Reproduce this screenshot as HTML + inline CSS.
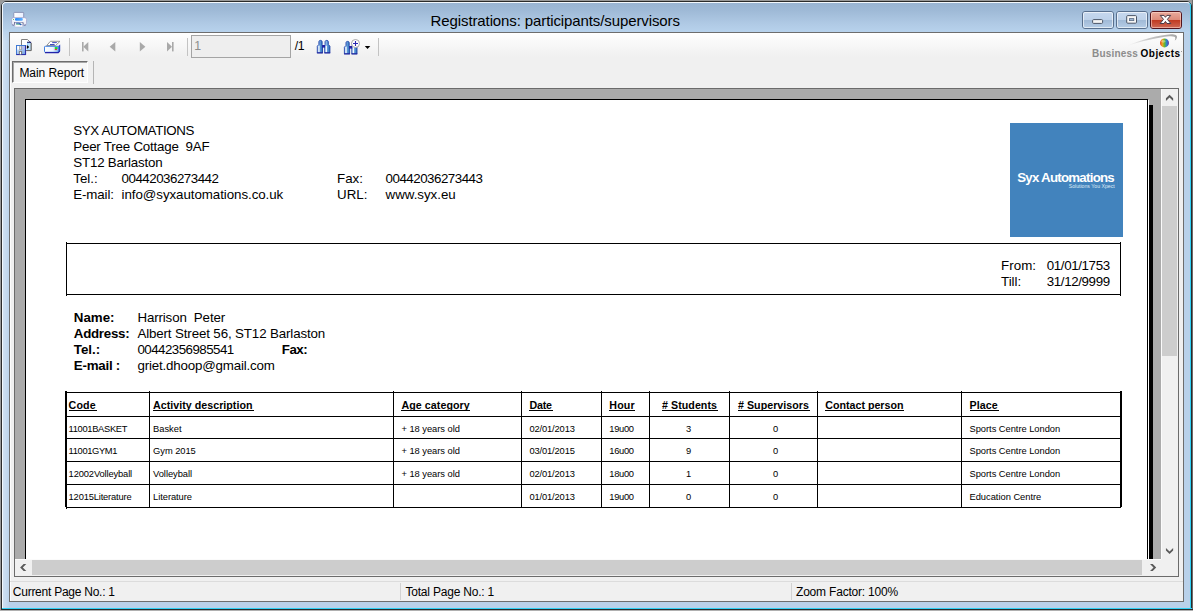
<!DOCTYPE html>
<html>
<head>
<meta charset="utf-8">
<title>Registrations: participants/supervisors</title>
<style>
*{margin:0;padding:0;box-sizing:border-box;}
html,body{width:1193px;height:611px;overflow:hidden;background:#b9d1ea;}
body{font-family:"Liberation Sans",sans-serif;position:relative;color:#000;font-size:12px;line-height:1;}
.a{position:absolute;}
.t{position:absolute;white-space:pre;line-height:1;font-family:"Liberation Sans",sans-serif;}
svg{position:absolute;overflow:visible;}
</style>
</head>
<body>
<div class="a" style="left:0px;top:0px;width:1193px;height:611px;background:#9c9c9c;"></div>
<div class="a" style="left:1px;top:1px;width:1191px;height:609px;background:#b9d1ea;border-radius:5px 5px 0 0;"></div>
<div class="a" style="left:2px;top:2px;width:1189px;height:31px;background:linear-gradient(#99b4d2 0,#9eb9d6 8px,#b0cae5 22px,#b8d3ed 31px);border-radius:4px 4px 0 0;"></div>
<div class="a" style="left:1px;top:1px;width:1191px;height:620px;border:1px solid #2b2b2b;border-radius:5px 5px 0 0;"></div>
<div class="a" style="left:2px;top:2px;width:1189px;height:620px;border:1px solid #f3f8fd;border-radius:4px 4px 0 0;border-right-color:#2fd0f5;"></div>
<div class="a" style="left:0px;top:0px;width:1px;height:611px;background:#9a9a9a;"></div>
<div class="a" style="left:0px;top:0px;width:1193px;height:1px;background:#9a9a9a;"></div>
<div class="a" style="left:1192px;top:0px;width:1px;height:611px;background:#6a6a6a;"></div>
<div class="a" style="left:2px;top:608px;width:1190px;height:1px;background:#2fd0f5;"></div>
<div class="a" style="left:1px;top:609px;width:1192px;height:1px;background:#2b2b2b;"></div>
<div class="a" style="left:0px;top:610px;width:1193px;height:1px;background:#b0b0b0;"></div>
<div class="t" style="left:430.60px;top:12px;font-size:15px;line-height:17px;height:17px;letter-spacing:-0.109px;">Registrations: participants/supervisors</div>
<div class="a" style="left:3px;top:28px;width:6px;height:580px;background:linear-gradient(90deg,#d0e0f1,#bdd4ec);-webkit-mask-image:linear-gradient(transparent,#000 14px);mask-image:linear-gradient(transparent,#000 14px);"></div>
<div class="a" style="left:9px;top:32px;width:1175px;height:570px;background:#f0f0f0;border:1px solid #6d6d6d;"></div>
<div class="a" style="left:10px;top:33px;width:1px;height:568px;background:#fcfcfc;"></div>
<div class="a" style="left:10px;top:33px;width:1173px;height:28px;background:linear-gradient(#ffffff 0,#fafafa 7px,#f0f0f0 24px);"></div>
<div class="a" style="left:69px;top:38px;width:1px;height:18px;background:#c3c3c3;"></div>
<div class="a" style="left:187px;top:38px;width:1px;height:18px;background:#c3c3c3;"></div>
<div class="a" style="left:378px;top:38px;width:1px;height:18px;background:#c3c3c3;"></div>
<svg style="left:80px;top:40px" width="100" height="14" viewBox="80 40 100 14"><g fill="#a9a9a9"><rect x="82" y="42" width="1.6" height="9.4"/><path d="M88.3 42v9.4l-5-4.7z"/><path d="M115.3 42v9.4l-5.6-4.7z"/><path d="M139.8 42v9.4l5.6-4.7z"/><path d="M167 42v9.4l5-4.7z"/><rect x="172" y="42" width="1.6" height="9.4"/></g></svg>
<div class="a" style="left:191px;top:35px;width:100px;height:23px;background:#eeeeee;border:1px solid #a4a4a4;"></div>
<div class="t" style="left:194.20px;top:39px;font-size:12.3px;line-height:14px;height:14px;color:#8c8c8c;">1</div>
<div class="t" style="left:294.80px;top:39px;font-size:12.3px;line-height:14px;height:14px;letter-spacing:-0.458px;">/1</div>
<div class="a" style="left:12px;top:61px;width:76px;height:22px;background:#f7f7f7;border:1px solid;border-color:#6d6d6d #fefefe #fefefe #6d6d6d;"></div>
<div class="a" style="left:13px;top:62px;width:74px;height:1px;background:#a8a8a8;"></div>
<div class="a" style="left:13px;top:62px;width:1px;height:20px;background:#a8a8a8;"></div>
<div class="t" style="left:19.40px;top:66px;font-size:12px;line-height:14px;height:14px;letter-spacing:-0.056px;">Main Report</div>
<div class="a" style="left:93px;top:61px;width:1px;height:23px;background:#b5b5b5;"></div>
<div class="a" style="left:14px;top:88px;width:1165px;height:489px;background:#ababab;border:1px solid #6b6b6b;"></div>
<div class="a" style="left:25px;top:99px;width:1123px;height:460px;background:#fff;border:1px solid #000;border-bottom:none;"></div>
<div class="a" style="left:1148px;top:100px;width:1px;height:459px;background:#fff;"></div>
<div class="a" style="left:1149px;top:105px;width:4px;height:454px;background:#000;"></div>
<div class="a" style="left:1161px;top:89px;width:17px;height:470px;background:#f0f0f0;"></div>
<div class="a" style="left:1161px;top:89px;width:1px;height:470px;background:#fbfbfb;"></div>
<div class="a" style="left:1162px;top:106px;width:15px;height:250px;background:#cdcdcd;"></div>
<div class="a" style="left:15px;top:559px;width:1163px;height:17px;background:#f0f0f0;"></div>
<div class="a" style="left:15px;top:559px;width:1146px;height:1px;background:#fbfbfb;"></div>
<div class="a" style="left:32px;top:560px;width:1110px;height:15px;background:#cdcdcd;"></div>
<div class="t" style="left:73.30px;top:123px;font-size:13.33px;line-height:15px;height:15px;letter-spacing:-0.355px;">SYX AUTOMATIONS</div>
<div class="t" style="left:73.30px;top:139px;font-size:13.33px;line-height:15px;height:15px;letter-spacing:-0.213px;">Peer Tree Cottage  9AF</div>
<div class="t" style="left:73.30px;top:155px;font-size:13.33px;line-height:15px;height:15px;letter-spacing:-0.198px;">ST12 Barlaston</div>
<div class="t" style="left:73.30px;top:171px;font-size:13.33px;line-height:15px;height:15px;letter-spacing:-0.012px;">Tel.:</div>
<div class="t" style="left:121.60px;top:171px;font-size:13.33px;line-height:15px;height:15px;letter-spacing:-0.499px;">00442036273442</div>
<div class="t" style="left:73.30px;top:187px;font-size:13.33px;line-height:15px;height:15px;letter-spacing:-0.129px;">E-mail:</div>
<div class="t" style="left:121.60px;top:187px;font-size:13.33px;line-height:15px;height:15px;letter-spacing:-0.063px;">info@syxautomations.co.uk</div>
<div class="t" style="left:337.00px;top:171px;font-size:13.33px;line-height:15px;height:15px;">Fax:</div>
<div class="t" style="left:385.60px;top:171px;font-size:13.33px;line-height:15px;height:15px;letter-spacing:-0.499px;">00442036273443</div>
<div class="t" style="left:337.00px;top:187px;font-size:13.33px;line-height:15px;height:15px;">URL:</div>
<div class="t" style="left:385.60px;top:187px;font-size:13.33px;line-height:15px;height:15px;letter-spacing:-0.030px;">www.syx.eu</div>
<div class="a" style="left:1010px;top:123px;width:113px;height:114px;background:#4283bd;"></div>
<div class="t" style="left:1017.20px;top:170px;font-size:13.3px;line-height:15px;height:15px;letter-spacing:-0.753px;font-weight:bold;color:#fff;">Syx Automations</div>
<div class="t" style="left:1068.70px;top:183px;font-size:5.2px;line-height:6px;height:6px;letter-spacing:-0.009px;color:#dfe9f4;">Solutions You Xpect</div>
<div class="a" style="left:66px;top:243px;width:1055px;height:1px;background:#000;"></div>
<div class="a" style="left:66px;top:294px;width:1055px;height:1px;background:#000;"></div>
<div class="a" style="left:66px;top:242px;width:1px;height:54px;background:#000;"></div>
<div class="a" style="left:1120px;top:242px;width:1px;height:54px;background:#000;"></div>
<div class="t" style="left:1001.00px;top:258px;font-size:13.33px;line-height:15px;height:15px;letter-spacing:0.049px;">From:</div>
<div class="t" style="left:1046.80px;top:258px;font-size:13.33px;line-height:15px;height:15px;letter-spacing:-0.379px;">01/01/1753</div>
<div class="t" style="left:1001.00px;top:274px;font-size:13.33px;line-height:15px;height:15px;">Till:</div>
<div class="t" style="left:1046.80px;top:274px;font-size:13.33px;line-height:15px;height:15px;letter-spacing:-0.379px;">31/12/9999</div>
<div class="t" style="left:73.80px;top:310px;font-size:13.33px;line-height:15px;height:15px;font-weight:bold;">Name:</div>
<div class="t" style="left:137.40px;top:310px;font-size:13.33px;line-height:15px;height:15px;letter-spacing:-0.131px;">Harrison  Peter</div>
<div class="t" style="left:73.80px;top:326px;font-size:13.33px;line-height:15px;height:15px;letter-spacing:-0.283px;font-weight:bold;">Address:</div>
<div class="t" style="left:137.40px;top:326px;font-size:13.33px;line-height:15px;height:15px;letter-spacing:-0.129px;">Albert Street 56, ST12 Barlaston</div>
<div class="t" style="left:73.80px;top:342px;font-size:13.33px;line-height:15px;height:15px;font-weight:bold;">Tel.:</div>
<div class="t" style="left:137.40px;top:342px;font-size:13.33px;line-height:15px;height:15px;letter-spacing:-0.530px;">00442356985541</div>
<div class="t" style="left:281.80px;top:342px;font-size:13.33px;line-height:15px;height:15px;letter-spacing:-0.503px;font-weight:bold;">Fax:</div>
<div class="t" style="left:73.80px;top:358px;font-size:13.33px;line-height:15px;height:15px;letter-spacing:-0.235px;font-weight:bold;">E-mail :</div>
<div class="t" style="left:137.40px;top:358px;font-size:13.33px;line-height:15px;height:15px;letter-spacing:-0.169px;">griet.dhoop@gmail.com</div>
<div class="a" style="left:66px;top:392px;width:1055px;height:1px;background:#000;"></div>
<div class="a" style="left:66px;top:416px;width:1055px;height:1px;background:#000;"></div>
<div class="a" style="left:66px;top:438px;width:1055px;height:1px;background:#000;"></div>
<div class="a" style="left:66px;top:461px;width:1055px;height:1px;background:#000;"></div>
<div class="a" style="left:66px;top:484px;width:1055px;height:1px;background:#000;"></div>
<div class="a" style="left:66px;top:507px;width:1055px;height:1px;background:#000;"></div>
<div class="a" style="left:149px;top:391px;width:1px;height:117px;background:#000;"></div>
<div class="a" style="left:393px;top:391px;width:1px;height:117px;background:#000;"></div>
<div class="a" style="left:521px;top:391px;width:1px;height:117px;background:#000;"></div>
<div class="a" style="left:601px;top:391px;width:1px;height:117px;background:#000;"></div>
<div class="a" style="left:649px;top:391px;width:1px;height:117px;background:#000;"></div>
<div class="a" style="left:729px;top:391px;width:1px;height:117px;background:#000;"></div>
<div class="a" style="left:817px;top:391px;width:1px;height:117px;background:#000;"></div>
<div class="a" style="left:961px;top:391px;width:1px;height:117px;background:#000;"></div>
<div class="a" style="left:65px;top:391px;width:1px;height:116px;background:#000;"></div>
<div class="a" style="left:66px;top:391px;width:1px;height:118px;background:#000;"></div>
<div class="a" style="left:1120px;top:391px;width:1px;height:117px;background:#000;"></div>
<div class="a" style="left:1121px;top:391px;width:1px;height:116px;background:#000;"></div>
<div class="t" style="left:68.60px;top:399px;font-size:10.67px;line-height:12px;height:12px;letter-spacing:0.142px;font-weight:bold;">Code</div>
<div class="a" style="left:69px;top:410px;width:28px;height:1px;background:#000;"></div>
<div class="t" style="left:153.10px;top:399px;font-size:10.67px;line-height:12px;height:12px;letter-spacing:0.025px;font-weight:bold;">Activity description</div>
<div class="a" style="left:153px;top:410px;width:101px;height:1px;background:#000;"></div>
<div class="t" style="left:401.40px;top:399px;font-size:10.67px;line-height:12px;height:12px;letter-spacing:0.073px;font-weight:bold;">Age category</div>
<div class="a" style="left:401px;top:410px;width:69px;height:1px;background:#000;"></div>
<div class="t" style="left:529.40px;top:399px;font-size:10.67px;line-height:12px;height:12px;letter-spacing:-0.176px;font-weight:bold;">Date</div>
<div class="a" style="left:529px;top:410px;width:24px;height:1px;background:#000;"></div>
<div class="t" style="left:609.30px;top:399px;font-size:10.67px;line-height:12px;height:12px;letter-spacing:0.169px;font-weight:bold;">Hour</div>
<div class="a" style="left:609px;top:410px;width:26px;height:1px;background:#000;"></div>
<div class="t" style="left:662.10px;top:399px;font-size:10.67px;line-height:12px;height:12px;letter-spacing:0.040px;font-weight:bold;"># Students</div>
<div class="a" style="left:662px;top:410px;width:56px;height:1px;background:#000;"></div>
<div class="t" style="left:738.00px;top:399px;font-size:10.67px;line-height:12px;height:12px;letter-spacing:0.035px;font-weight:bold;"># Supervisors</div>
<div class="a" style="left:738px;top:410px;width:72px;height:1px;background:#000;"></div>
<div class="t" style="left:825.30px;top:399px;font-size:10.67px;line-height:12px;height:12px;letter-spacing:-0.004px;font-weight:bold;">Contact person</div>
<div class="a" style="left:825px;top:410px;width:79px;height:1px;background:#000;"></div>
<div class="t" style="left:969.50px;top:399px;font-size:10.67px;line-height:12px;height:12px;letter-spacing:0.104px;font-weight:bold;">Place</div>
<div class="a" style="left:970px;top:410px;width:29px;height:1px;background:#000;"></div>
<div class="t" style="left:68.60px;top:424px;font-size:9.33px;line-height:10px;height:10px;letter-spacing:-0.327px;">11001BASKET</div>
<div class="t" style="left:153.10px;top:424px;font-size:9.33px;line-height:10px;height:10px;letter-spacing:-0.025px;">Basket</div>
<div class="t" style="left:401.40px;top:424px;font-size:9.33px;line-height:10px;height:10px;letter-spacing:-0.021px;">+ 18 years old</div>
<div class="t" style="left:529.40px;top:424px;font-size:9.33px;line-height:10px;height:10px;letter-spacing:-0.133px;">02/01/2013</div>
<div class="t" style="left:609.30px;top:424px;font-size:9.33px;line-height:10px;height:10px;letter-spacing:-0.311px;">19u00</div>
<div class="t" style="left:685.91px;top:424px;font-size:9.33px;line-height:10px;height:10px;">3</div>
<div class="t" style="left:772.91px;top:424px;font-size:9.33px;line-height:10px;height:10px;">0</div>
<div class="t" style="left:969.50px;top:424px;font-size:9.33px;line-height:10px;height:10px;letter-spacing:-0.031px;">Sports Centre London</div>
<div class="t" style="left:68.60px;top:446px;font-size:9.33px;line-height:10px;height:10px;letter-spacing:-0.362px;">11001GYM1</div>
<div class="t" style="left:153.10px;top:446px;font-size:9.33px;line-height:10px;height:10px;letter-spacing:-0.049px;">Gym 2015</div>
<div class="t" style="left:401.40px;top:446px;font-size:9.33px;line-height:10px;height:10px;letter-spacing:-0.021px;">+ 18 years old</div>
<div class="t" style="left:529.40px;top:446px;font-size:9.33px;line-height:10px;height:10px;letter-spacing:-0.133px;">03/01/2015</div>
<div class="t" style="left:609.30px;top:446px;font-size:9.33px;line-height:10px;height:10px;letter-spacing:-0.311px;">16u00</div>
<div class="t" style="left:685.91px;top:446px;font-size:9.33px;line-height:10px;height:10px;">9</div>
<div class="t" style="left:772.91px;top:446px;font-size:9.33px;line-height:10px;height:10px;">0</div>
<div class="t" style="left:969.50px;top:446px;font-size:9.33px;line-height:10px;height:10px;letter-spacing:-0.031px;">Sports Centre London</div>
<div class="t" style="left:68.60px;top:469px;font-size:9.33px;line-height:10px;height:10px;letter-spacing:-0.126px;">12002Volleyball</div>
<div class="t" style="left:153.10px;top:469px;font-size:9.33px;line-height:10px;height:10px;letter-spacing:-0.058px;">Volleyball</div>
<div class="t" style="left:401.40px;top:469px;font-size:9.33px;line-height:10px;height:10px;letter-spacing:-0.021px;">+ 18 years old</div>
<div class="t" style="left:529.40px;top:469px;font-size:9.33px;line-height:10px;height:10px;letter-spacing:-0.133px;">02/01/2013</div>
<div class="t" style="left:609.30px;top:469px;font-size:9.33px;line-height:10px;height:10px;letter-spacing:-0.311px;">18u00</div>
<div class="t" style="left:685.91px;top:469px;font-size:9.33px;line-height:10px;height:10px;">1</div>
<div class="t" style="left:772.91px;top:469px;font-size:9.33px;line-height:10px;height:10px;">0</div>
<div class="t" style="left:969.50px;top:469px;font-size:9.33px;line-height:10px;height:10px;letter-spacing:-0.031px;">Sports Centre London</div>
<div class="t" style="left:68.60px;top:492px;font-size:9.33px;line-height:10px;height:10px;letter-spacing:-0.161px;">12015Literature</div>
<div class="t" style="left:153.10px;top:492px;font-size:9.33px;line-height:10px;height:10px;letter-spacing:-0.057px;">Literature</div>
<div class="t" style="left:529.40px;top:492px;font-size:9.33px;line-height:10px;height:10px;letter-spacing:-0.133px;">01/01/2013</div>
<div class="t" style="left:609.30px;top:492px;font-size:9.33px;line-height:10px;height:10px;letter-spacing:-0.311px;">19u00</div>
<div class="t" style="left:685.91px;top:492px;font-size:9.33px;line-height:10px;height:10px;">0</div>
<div class="t" style="left:772.91px;top:492px;font-size:9.33px;line-height:10px;height:10px;">0</div>
<div class="t" style="left:969.50px;top:492px;font-size:9.33px;line-height:10px;height:10px;letter-spacing:-0.020px;">Education Centre</div>
<div class="a" style="left:10px;top:581px;width:1173px;height:1px;background:#dcdcdc;"></div>
<div class="a" style="left:400px;top:583px;width:1px;height:17px;background:#d2d2d2;"></div>
<div class="a" style="left:791px;top:583px;width:1px;height:17px;background:#d2d2d2;"></div>
<div class="t" style="left:12.80px;top:585px;font-size:12px;line-height:14px;height:14px;letter-spacing:-0.251px;">Current Page No.: 1</div>
<div class="t" style="left:405.40px;top:585px;font-size:12px;line-height:14px;height:14px;letter-spacing:-0.197px;">Total Page No.: 1</div>
<div class="t" style="left:796.00px;top:585px;font-size:12px;line-height:14px;height:14px;letter-spacing:-0.198px;">Zoom Factor: 100%</div>
<svg style="left:10px;top:10px" width="20" height="20" viewBox="10 10 20 20">
<defs><linearGradient id="pb" x1="0" y1="0" x2="0" y2="1"><stop offset="0" stop-color="#ffffff"/><stop offset="1" stop-color="#e3e6f4"/></linearGradient>
<linearGradient id="ps" x1="0" y1="0" x2="1" y2="0"><stop offset="0" stop-color="#2a86f2"/><stop offset="1" stop-color="#5fb2ff"/></linearGradient>
<linearGradient id="pp" x1="0" y1="0" x2="1" y2="0"><stop offset="0" stop-color="#ffffff"/><stop offset="1" stop-color="#e9efff"/></linearGradient></defs>
<rect x="13.800" y="12.400" width="9.900" height="5.800" rx="0.700" fill="url(#pp)" stroke="#7f86ab" stroke-width="0.800"/>
<rect x="11.6" y="17.700" width="14.900" height="7.400" rx="1.700" fill="url(#pb)" stroke="#a4a8d0" stroke-width="0.800"/>
<path d="M12.200 24.600q0.300 0.700 1.700 0.700M26 24.600q-0.300 0.700-2.200 0.700" stroke="#6c6c98" stroke-width="0.800" fill="none"/>
<rect x="15" y="17.900" width="7.800" height="2.900" rx="1.200" fill="url(#ps)"/>
<rect x="13.100" y="19" width="0.900" height="0.900" fill="#3fae3f"/>
<rect x="14" y="22.400" width="9.400" height="2.200" fill="#23285e"/>
<rect x="14.900" y="22.700" width="7.700" height="4.300" rx="0.500" fill="#fdfdff" stroke="#b3b7d8" stroke-width="0.600"/>
<path d="M16 23.500h4.600l1.200 1.200-5.800-0.300z" fill="#2e9a6a"/><path d="M16.200 22.800h3l2.800 2.200-1.600 0.300-1.400-1.700h-2.800z" fill="#2a4fc0"/>
</svg>
<div class="a" style="left:1082px;top:11px;width:32px;height:18px;border:1px solid #586f8d;border-radius:3px;overflow:hidden;"><div class="a" style="left:0;top:0;width:100%;height:8px;background:linear-gradient(#c6d8ee,#bdd1e9)"></div><div class="a" style="left:0;top:8px;width:100%;height:8px;background:linear-gradient(#a0b9d6,#b6cde7)"></div><div class="a" style="left:0;top:0;width:30px;height:16px;border:1px solid rgba(255,255,255,.6);border-radius:2px;"></div></div>
<div class="a" style="left:1116px;top:11px;width:32px;height:18px;border:1px solid #586f8d;border-radius:3px;overflow:hidden;"><div class="a" style="left:0;top:0;width:100%;height:8px;background:linear-gradient(#c6d8ee,#bdd1e9)"></div><div class="a" style="left:0;top:8px;width:100%;height:8px;background:linear-gradient(#a0b9d6,#b6cde7)"></div><div class="a" style="left:0;top:0;width:30px;height:16px;border:1px solid rgba(255,255,255,.6);border-radius:2px;"></div></div>
<div class="a" style="left:1150px;top:11px;width:32px;height:18px;border:1px solid #53141d;border-radius:3px;overflow:hidden;"><div class="a" style="left:0;top:0;width:100%;height:8px;background:linear-gradient(#e9aa9c,#dd8a79)"></div><div class="a" style="left:0;top:8px;width:100%;height:8px;background:linear-gradient(#c0381f,#cf6a57)"></div><div class="a" style="left:0;top:0;width:30px;height:16px;border:1px solid rgba(255,220,210,.55);border-radius:2px;"></div></div>
<svg style="left:1080px;top:8px" width="106" height="24" viewBox="1080 8 106 24">
<rect x="1092.6" y="19.6" width="10" height="3.8" rx="1" fill="#f4f4f4" stroke="#4b5567" stroke-width="1"/>
<rect x="1126.7" y="15.6" width="9.8" height="7.6" rx="1" fill="#f6f6f6" stroke="#4b5567" stroke-width="1"/>
<rect x="1129.4" y="18.6" width="4.4" height="2" fill="#9db6d3" stroke="#5b6b84" stroke-width="0.8"/>
<path d="M1160.2 15.4h3.8l1.450 1.900 1.450-1.900h3.800l-3.300 3.950 3.400 4.150h-3.900l-1.450-2.100-1.450 2.100h-3.900l3.400-4.150z" fill="#ffffff" stroke="#4a3b47" stroke-width="1" stroke-linejoin="round"/>
</svg>
<svg style="left:14px;top:36px" width="50" height="22" viewBox="14 36 50 22">
<defs><linearGradient id="fl" x1="0" y1="0" x2="1" y2="1"><stop offset="0" stop-color="#e8f3ff"/><stop offset="0.5" stop-color="#a9c8f0"/><stop offset="1" stop-color="#6f9fe0"/></linearGradient>
<linearGradient id="pr" x1="0" y1="0" x2="1" y2="0"><stop offset="0" stop-color="#ffffff"/><stop offset="0.6" stop-color="#eaf4ff"/><stop offset="1" stop-color="#8fc0f0"/></linearGradient></defs>
<path d="M21.5 39.5h6l3.5 3.5v7.5h-9.500z" fill="#ffffff" stroke="#7f7f7f" stroke-width="1"/>
<rect x="27" y="43" width="3.500" height="7" fill="#9bd6ff"/><rect x="28.600" y="43.500" width="1" height="6" fill="#e8f6ff"/>
<path d="M27 42.3h4.2" stroke="#14186e" stroke-width="1.1"/>
<path d="M26.900 44.900l2.300 2-2.300 2z" fill="#000"/>
<path d="M31.2 43v7.6h-4.5" fill="none" stroke="#6e6e6e" stroke-width="1"/>
<rect x="16.5" y="45.5" width="9" height="9" fill="url(#fl)" stroke="#3f78d4" stroke-width="1"/>
<path d="M16.3 54.6h9.4M25.6 45.5v9.3" stroke="#2a2aa6" stroke-width="1" fill="none"/>
<rect x="17.300" y="46.100" width="2.100" height="3.500" fill="#ffffff"/><rect x="19.300" y="46" width="2.500" height="4.100" fill="#9c9c9c"/><rect x="20" y="46.200" width="1" height="3.200" fill="#e4e4e4"/>
<rect x="22" y="46.200" width="3" height="3" fill="#b9b4ea" opacity=".7"/>
<rect x="18.900" y="51" width="3.200" height="3.300" fill="#7c7c7c"/><rect x="19.900" y="51.900" width="1.100" height="2.400" fill="#ffffff"/>
<!-- print icon -->
<path d="M50.4 41.3h9.6l-4.4 4.2h-8.9z" fill="#ffffff" stroke="#8a8a8a" stroke-width="0.9"/>
<path d="M52.2 42.6h4.6M50 44.5h4.6" stroke="#2b35b5" stroke-width="0.9"/>
<path d="M58.3 46l1.9-1.6v6.2l-1.9 1.9z" fill="#2743c8"/>
<rect x="44.5" y="46.3" width="13.8" height="6" rx="0.8" fill="url(#pr)" stroke="#3f7fe0" stroke-width="1"/>
<path d="M45 52.6h13.2l1.6-1.6" stroke="#2222aa" stroke-width="1.1" fill="none"/>
<rect x="54.8" y="47.1" width="2.7" height="1.9" fill="#1edb2a"/><rect x="54.8" y="49.1" width="2.2" height="1" fill="#f0202a"/>
</svg>
<svg style="left:314px;top:36px" width="62" height="22" viewBox="314 36 62 22">
<defs><linearGradient id="bn" x1="0" y1="0" x2="1" y2="0"><stop offset="0" stop-color="#cfe6ff"/><stop offset="0.45" stop-color="#6aa3de"/><stop offset="1" stop-color="#2a6fb8"/></linearGradient></defs>
<g transform="translate(316.9 40.2)"><path d="M0.4 12.6V6l1.6-1.8V1.4c0-1.6 3.2-1.6 3.2 0v2.8L5.6 6v6.600z" fill="url(#bn)" stroke="#1d3fa8" stroke-width="0.9" stroke-linejoin="round"/><path d="M7.8 12.6V6l0.400-1.800V1.400c0-1.600 3.200-1.600 3.200 0v2.800L13 6v6.600z" fill="url(#bn)" stroke="#1d3fa8" stroke-width="0.9" stroke-linejoin="round"/><rect x="5.200" y="4.800" width="3" height="2.600" fill="#2222a4"/><rect x="1.500" y="5.600" width="1.200" height="6.400" fill="#ffffff" opacity=".9"/><rect x="8.900" y="5.600" width="1.200" height="6.400" fill="#ffffff" opacity=".9"/><path d="M0 12.700h6M7.400 12.700h6" stroke="#1c1c9c" stroke-width="1"/></g><g transform="translate(344 41.2)"><path d="M0.4 12.6V6l1.6-1.8V1.4c0-1.6 3.2-1.6 3.2 0v2.8L5.6 6v6.600z" fill="url(#bn)" stroke="#1d3fa8" stroke-width="0.9" stroke-linejoin="round"/><path d="M7.8 12.6V6l0.400-1.800V1.400c0-1.600 3.200-1.600 3.200 0v2.800L13 6v6.600z" fill="url(#bn)" stroke="#1d3fa8" stroke-width="0.9" stroke-linejoin="round"/><rect x="5.200" y="4.800" width="3" height="2.600" fill="#2222a4"/><rect x="1.500" y="5.600" width="1.200" height="6.400" fill="#ffffff" opacity=".9"/><rect x="8.900" y="5.600" width="1.200" height="6.400" fill="#ffffff" opacity=".9"/><path d="M0 12.700h6M7.400 12.700h6" stroke="#1c1c9c" stroke-width="1"/></g>
<circle cx="355.5" cy="43.5" r="4" fill="#ffffff" stroke="#a6a6a6" stroke-width="1"/>
<path d="M353 43.500h5M355.500 41v5" stroke="#2a2ab0" stroke-width="1.100"/>
<path d="M364.800 46.100h5.500l-2.750 3z" fill="#000"/>
</svg>
<svg style="left:1085px;top:33px" width="98" height="28" viewBox="1085 33 98 28">
<defs><linearGradient id="rb" x1="0" y1="0" x2="1" y2="0"><stop offset="0" stop-color="#e0392b"/><stop offset="0.25" stop-color="#f0a020"/><stop offset="0.5" stop-color="#6ab82e"/><stop offset="0.75" stop-color="#2a7fd0"/><stop offset="1" stop-color="#6a3aa8"/></linearGradient>
<linearGradient id="sw" x1="0" y1="0" x2="1" y2="0"><stop offset="0" stop-color="#d0d0d0" stop-opacity="0"/><stop offset="0.45" stop-color="#c6c6c6"/><stop offset="1" stop-color="#a6a6a6"/></linearGradient></defs>
<path d="M1126 46.300C1140 40 1160 34.600 1171 34.200C1175 34.100 1177.400 35.400 1177 37.200C1176.700 38.600 1176 39.800 1174.800 40.600C1175.400 38.800 1175.600 37.400 1174.400 36.800C1172.500 35.900 1168 36.200 1162 37.300C1150 39.500 1137 42.400 1126 46.300Z" fill="url(#sw)"/>
<circle cx="1164.500" cy="42.900" r="4.500" fill="url(#rb)"/>
<ellipse cx="1163.300" cy="41.300" rx="2" ry="1.400" fill="#fff" opacity=".35"/>
</svg>
<div class="t" style="left:1092.00px;top:48px;font-size:10px;line-height:11px;height:11px;letter-spacing:0.191px;font-weight:bold;color:#8c8c8c;">Business</div>
<div class="t" style="left:1140.60px;top:48px;font-size:10px;line-height:11px;height:11px;letter-spacing:0.453px;font-weight:bold;color:#000;">Objects</div>
<div class="a" style="left:1181px;top:51px;width:1px;height:1px;background:#9a9a9a;"></div>
<svg style="left:0;top:0" width="1193" height="611" viewBox="0 0 1193 611"><g fill="#5a5a5a"><path d="M1150.00 563.90 L1152.70 563.90 L1156.20 567.50 L1152.70 571.10 L1150.00 571.10 L1153.50 567.50Z"/><path d="M26.30 563.90 L23.60 563.90 L20.10 567.50 L23.60 571.10 L26.30 571.10 L22.80 567.50Z"/><path d="M1165.95 101.00 L1165.95 98.30 L1169.55 94.80 L1173.15 98.30 L1173.15 101.00 L1169.55 97.50Z"/><path d="M1165.95 547.90 L1165.95 550.60 L1169.55 554.10 L1173.15 550.60 L1173.15 547.90 L1169.55 551.40Z"/></g></svg>
</body>
</html>
